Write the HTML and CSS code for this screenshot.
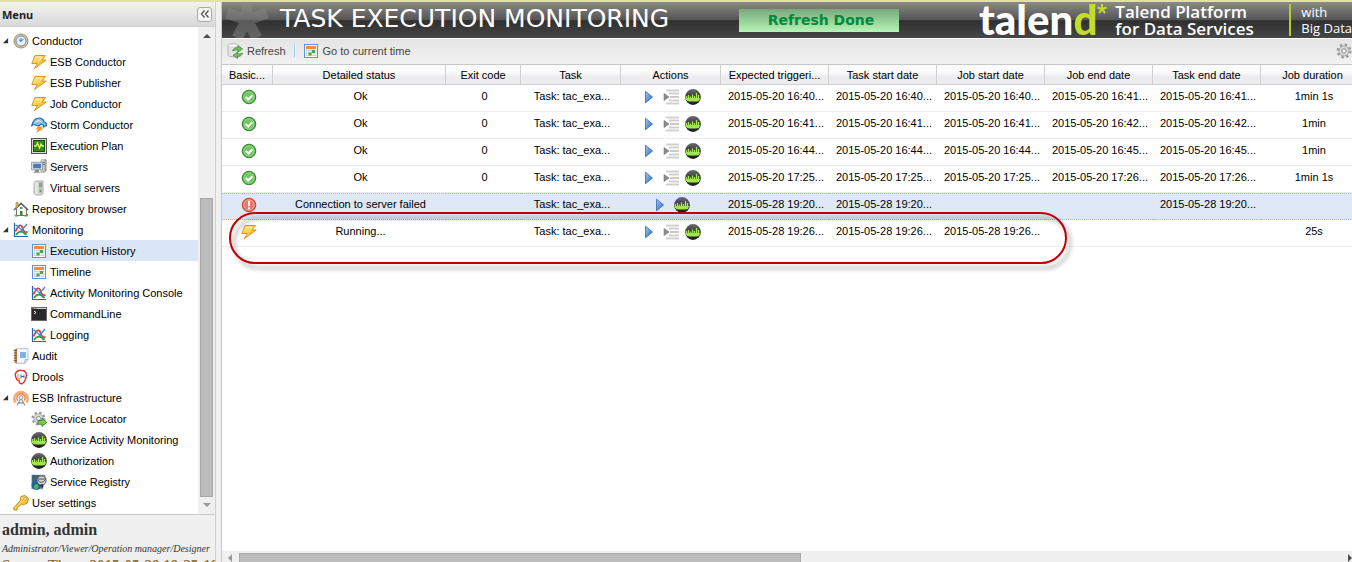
FILE: index.html
```html
<!DOCTYPE html>
<html lang="en">
<head>
<meta charset="utf-8">
<title>Task Execution Monitoring</title>
<link rel="stylesheet" href="styles.css">
</head>
<body>
<svg class="defs" aria-hidden="true">
  <defs>
    <linearGradient id="gold" x1="0" y1="0" x2="1" y2="1"><stop offset="0" stop-color="#ffef8c"/><stop offset="1" stop-color="#f2a813"/></linearGradient>
    <linearGradient id="blue" x1="0" y1="0" x2="1" y2="1"><stop offset="0" stop-color="#a9cdf8"/><stop offset="1" stop-color="#1e62c0"/></linearGradient>
    <linearGradient id="metal" x1="0" y1="0" x2="1" y2="0"><stop offset="0" stop-color="#f4f4f4"/><stop offset="1" stop-color="#9c9c9c"/></linearGradient>
    <linearGradient id="orb" x1="0" y1="0" x2="0" y2="1"><stop offset="0" stop-color="#6a6a6e"/><stop offset=".5" stop-color="#3a3a3e"/><stop offset="1" stop-color="#1c1c20"/></linearGradient>
  </defs>
  <symbol id="i-clock" viewBox="0 0 16 16"><circle cx="8" cy="8" r="7" fill="#d8c3a0" stroke="#a88f68"/><circle cx="8" cy="8" r="5" fill="#e8f1fb" stroke="#6e8fb8"/><path d="M8 8.500V5M8 8.500l2.500-2.500M8 8.500L5.800 6.500" fill="none" stroke="#456a9c"/></symbol>
  <symbol id="i-bolt" viewBox="0 0 16 16"><path d="M4 1.500h10.500L11 6h4.200L3.200 14.800 6.500 9.500H.8z" fill="url(#gold)" stroke="#d8962a"/><path d="M5 3h6L8 7" fill="none" stroke="#fff3b0"/></symbol>
  <symbol id="i-storm" viewBox="0 0 16 16"><path d="M.8 8.500c1-4 3-7.500 7.200-7.500 3 0 5 2 5 4 2 0 2.500 1.500 2.500 3.500l-3 1.500c.5-2-1-3.500-3-2.500-1 1-2 2-4 1C4 7.500 2.500 7.500.8 8.500z" fill="#8cc3ea" stroke="#1c6eaf" stroke-width="1.200"/><path d="M4 5.500c2-2.500 5-2.500 7 .5" fill="none" stroke="#fff"/><path d="M7 9.500h5l-2 2h3L5 16l2-3.500H4.500z" fill="#f39a2b"/></symbol>
  <symbol id="i-plan" viewBox="0 0 16 16"><rect x=".5" y=".5" width="15" height="15" fill="#d8d8d8" stroke="#555"/><rect x="2.500" y="2.500" width="11" height="11" fill="#3a8a18" stroke="#1f4f10"/><path d="M3 8h2l1.500-3 2 5 1.500-4 1 2h2" fill="none" stroke="#d8ff6c" stroke-width="1.300"/></symbol>
  <symbol id="i-servers" viewBox="0 0 16 16"><path d="M10 1.500l1-.8h4.200v11l-1.500 1.500H10z" fill="url(#metal)" stroke="#888" stroke-width=".7"/><path d="M11.500 3.500h2.500M11.500 5.500h2.500" stroke="#777"/><rect x=".7" y="3.200" width="10.800" height="7.600" fill="#dfe3e8" stroke="#888" stroke-width=".8"/><rect x="2.200" y="4.700" width="7.800" height="4.600" fill="#4978bd"/><path d="M4.500 11h3.500v2.500H3z" fill="#888"/><path d="M2.500 13.600h7" stroke="#aaa"/></symbol>
  <symbol id="i-server" viewBox="0 0 16 16"><path d="M3 2.500L5 1h7v12.500L10.500 15H5l-2-1.500z" fill="#e4e4e4" stroke="#999" stroke-width=".8"/><path d="M7.500 2h4v11.500h-4z" fill="#bdbdbd"/><path d="M8 4h3M8 6h3" stroke="#777"/><circle cx="9.500" cy="11" r="1" fill="#4caf35"/></symbol>
  <symbol id="i-house" viewBox="0 0 16 16"><path d="M3.500 7.500L8 3l5.500 4.500v7h-10z" fill="#fffbe4" stroke="#6e7b6b"/><path d="M1 9l7-6.800L15.200 9" fill="none" stroke="#54657a" stroke-width="1.500"/><path d="M3 1.500h2v4l-2 2z" fill="#eebd4c" stroke="#937532" stroke-width=".6"/><path d="M7 6h2.500v2H7z" fill="#4e87bd"/><path d="M7 10h2.500v4.500H7z" fill="#3b7f5b"/><path d="M2 13.500v1.500h3M11.500 15h3v-2" fill="none" stroke="#49a53a"/></symbol>
  <symbol id="i-chart" viewBox="0 0 16 16"><path d="M1.500 1v13.500H15" fill="none" stroke="#2566b7" stroke-width="1.200"/><path d="M2.500 9.500c3-7 5.500-8 7-3.500s3 4.500 5 4" fill="none" stroke="#e23838" stroke-width="1.700"/><path d="M2.500 3c4 1 5 6 11.500 9.500M8 9l6-7" fill="none" stroke="#4986cf" stroke-width="1.300"/><path d="M3 13c3-5 7-4 10 0" fill="none" stroke="#399a37" stroke-width="1.700"/></symbol>
  <symbol id="i-cal" viewBox="0 0 16 16"><rect x="1.500" y="1.500" width="13" height="13" fill="#fff" stroke="#5d94d5"/><path d="M3 3h10v3H3z" fill="#f58a3f"/><path d="M3 7.500h10M3 10h10M3 12.500h10M3.500 6v7M6 6v7M8.500 6v7M11 6v7M13 6v7" stroke="#b6cae1" stroke-width=".7"/><path d="M9 7h3v3H9zM5.500 9.500h3v3h-3z" fill="#4da54a"/></symbol>
  <symbol id="i-cmd" viewBox="0 0 16 16"><rect x=".5" y="1.500" width="15" height="13" fill="#29292b" stroke="#66666c"/><path d="M1 2.500h14" stroke="#d4d4d4"/><path d="M1 2.500h2" stroke="#e23b2e"/><path d="M3.500 2.500h2" stroke="#4fb54a"/><path d="M3 5l2 1.500L3 8" fill="none" stroke="#fff"/></symbol>
  <symbol id="i-audit" viewBox="0 0 16 16"><path d="M3 .7h12v11l-3 3.600H3z" fill="#f5f8fc" stroke="#a6b1c2" stroke-width=".8"/><rect x="1.500" y="1" width="2.500" height="14" fill="#b98553"/><path d="M.8 2.500H4M.8 5H4M.8 7.500H4M.8 10H4M.8 12.500H4" stroke="#6f4930" stroke-width=".8"/><path d="M7 5h6M7 7h6M7 9h6" stroke="#5c9ae5" stroke-width="1.400"/><path d="M15 11.700h-3v3.600" fill="none" stroke="#a6b1c2"/></symbol>
  <symbol id="i-drools" viewBox="0 0 16 16"><path d="M3 8.500C1 4 4 1 8 1.200c4.500 0 6.500 3.300 5 7.300-.5 2-1 4.500-3.500 6-2 .8-3.500-.5-3.500-3C4.500 11.500 3.300 10.500 3 8.500z" fill="#fff" stroke="#dd2d2d" stroke-width="1.400"/><path d="M5 5v5h2" fill="none" stroke="#e5b22d" stroke-width="1.200"/><path d="M8 5.500v4M8 7.500h3M11 6v3" fill="none" stroke="#3b66b6"/></symbol>
  <symbol id="i-antenna" viewBox="0 0 16 16"><path d="M2.500 12.500A6.600 6.600 0 1 1 13.500 12.500" fill="none" stroke="#f4ad78" stroke-width="2.800"/><path d="M4.800 10.500A4 4 0 1 1 11.200 10.500" fill="none" stroke="#ed7b38" stroke-width="1.300"/><circle cx="8" cy="7.500" r="1.900" fill="#eee" stroke="#9a9a9a"/><path d="M7.500 9L4 15.500M8.500 9l3.500 6.500M5.500 13h5" fill="none" stroke="#999" stroke-width="1.300"/></symbol>
  <symbol id="i-gear" viewBox="0 0 16 16"><circle cx="8" cy="8" r="6.200" fill="none" stroke="#9b9b9b" stroke-width="2.600" stroke-dasharray="2.430 2.430"/><circle cx="8" cy="8" r="5" fill="#d9d9d9" stroke="#a5a5a5"/><circle cx="8" cy="8" r="2.200" fill="#f4f4f4" stroke="#888"/></symbol>
  <symbol id="i-locator" viewBox="0 0 16 16"><use href="#i-gear" width="15" height="15"/><path d="M7 9.500h4V7l4.800 4.500-4.800 4v-2.300H7z" fill="#79cb52" stroke="#2c7a22" stroke-width=".8"/></symbol>
  <symbol id="i-sam" viewBox="0 0 16 16"><circle cx="8" cy="8" r="7.900" fill="url(#orb)"/><path d="M1.500 7v4M3.500 6v5M5.500 7.500v4M7.500 5.500v6M9.500 7v4M11.500 4v7M13.500 6v5" stroke="#a6ec4e" stroke-width="1.300"/><path d="M1 9h14l-1 3c-4 .8-8 .8-12 0z" fill="#a0e650"/></symbol>
  <symbol id="i-registry" viewBox="0 0 16 16"><path d="M.5.800h14v7l-3 7.500H.5z" fill="#8f979b"/><circle cx="5.500" cy="11" r="5" fill="#1965ad"/><path d="M3 12c2-3 3-2 4-1s1 2-1 4c-2 1-3-1-3-3z" fill="#5ab444"/><path d="M1 1h8L5 6 1 8z" fill="#416477"/><circle cx="10.500" cy="6.500" r="4.600" fill="#d5d8da" stroke="#4b4f52"/><path d="M7 5h8M7 6c1 3 5 3 7 0" fill="none" stroke="#4b4f52"/><path d="M9 11l3-1v5z" fill="#333"/></symbol>
  <symbol id="i-key" viewBox="0 0 16 16"><path d="M8 1.500l4-1 3.500 3-1 4.500-4 1.700-2-.7L4 13v2H1l-.5-2L7 6z" fill="url(#gold)" stroke="#c48d22"/><circle cx="12" cy="4" r="1.400" fill="#fff" stroke="#b58120" stroke-width=".7"/></symbol>
  <symbol id="i-refresh" viewBox="0 0 16 16"><path d="M1 2.500C1 .2 11 .2 11 2.500V12c0 2.500-10 2.500-10 0z" fill="#e4e4e4" stroke="#aaa" stroke-width=".8"/><ellipse cx="6" cy="2.600" rx="4.500" ry="1.500" fill="#fff" stroke="#bbb" stroke-width=".5"/><path d="M5.500 8c1-3 3-3.500 5.500-3.500V2.500L15.500 6 11 9V7c-2 0-3.500 0-5.500 1z" fill="#72c05b" stroke="#328335" stroke-width=".7"/><path d="M15.500 10c-1 3-3 3.500-5 3.500v2L6 12.300 10.500 9v2c2 0 3 0 5-1z" fill="#72c05b" stroke="#328335" stroke-width=".7"/></symbol>
  <symbol id="i-ok" viewBox="0 0 16 16"><circle cx="8" cy="8" r="6.800" fill="#4cad45" stroke="#38842f"/><circle cx="8" cy="8" r="5.200" fill="#70c663" stroke="#b4e3a8" stroke-width=".7"/><path d="M4.800 8l2.400 2.500 4.200-4.300" fill="none" stroke="#fff" stroke-width="2"/></symbol>
  <symbol id="i-error" viewBox="0 0 16 16"><circle cx="8" cy="8" r="6.800" fill="#e35246" stroke="#c94438"/><circle cx="8" cy="8" r="5.300" fill="#ec7668" stroke="#ffbcb2" stroke-width=".8"/><path d="M8 3.700v5.500M8 10.300v2" stroke="#fff" stroke-width="2"/></symbol>
  <symbol id="i-play" viewBox="0 0 16 16"><path d="M4.500 2.200L11.500 8l-7 5.800z" fill="url(#blue)" stroke="#2b68bd" stroke-width=".8"/></symbol>
  <symbol id="i-log" viewBox="0 0 16 16"><path d="M3 1.500h13M6 4.500h10M7 8h9M6 11.500h10M3 14.500h13" stroke="#aaa" stroke-width="1.700"/><path d="M3 1.500h13M6 4.500h10M7 8h9M6 11.500h10M3 14.500h13" stroke="#e6e6e6" stroke-width=".6"/><path d="M1 4.500L6 8l-5 3.500z" fill="#8b8b8b" stroke="#777" stroke-width=".6"/></symbol>
  <symbol id="i-open" viewBox="0 0 8 8"><path d="M1 7h6V1z" fill="#333"/></symbol>
  <symbol id="i-star" viewBox="0 0 50 36"><path d="M25 18V-4M25 18L5 11M25 18l20-7M25 18L15 36M25 18l10 18" fill="none" stroke="#8c8c8c" stroke-width="11"/></symbol>
</svg>

<div class="page">
  <aside class="sidebar">
    <header class="menu-head">
      <h2 class="menu-title">Menu</h2>
      <button class="collapse" aria-label="Collapse menu"><svg viewBox="0 0 10 8"><path d="M4.500.5L1.500 4l3 3.500M8.500.5l-3 3.500 3 3.500" fill="none" stroke="#555" stroke-width="1.300"/></svg></button>
    </header>
    <div class="menu-body">
      <nav class="tree">
        <a class="node" href="#"><svg class="arrow"><use href="#i-open"/></svg><svg class="icon"><use href="#i-clock"/></svg>Conductor</a>
        <a class="node sub" href="#"><svg class="icon"><use href="#i-bolt"/></svg>ESB Conductor</a>
        <a class="node sub" href="#"><svg class="icon"><use href="#i-bolt"/></svg>ESB Publisher</a>
        <a class="node sub" href="#"><svg class="icon"><use href="#i-bolt"/></svg>Job Conductor</a>
        <a class="node sub" href="#"><svg class="icon"><use href="#i-storm"/></svg>Storm Conductor</a>
        <a class="node sub" href="#"><svg class="icon"><use href="#i-plan"/></svg>Execution Plan</a>
        <a class="node sub" href="#"><svg class="icon"><use href="#i-servers"/></svg>Servers</a>
        <a class="node sub" href="#"><svg class="icon"><use href="#i-server"/></svg>Virtual servers</a>
        <a class="node leaf" href="#"><svg class="icon"><use href="#i-house"/></svg>Repository browser</a>
        <a class="node" href="#"><svg class="arrow"><use href="#i-open"/></svg><svg class="icon"><use href="#i-chart"/></svg>Monitoring</a>
        <a class="node sub current" href="#" aria-current="page"><svg class="icon"><use href="#i-cal"/></svg>Execution History</a>
        <a class="node sub" href="#"><svg class="icon"><use href="#i-cal"/></svg>Timeline</a>
        <a class="node sub" href="#"><svg class="icon"><use href="#i-chart"/></svg>Activity Monitoring Console</a>
        <a class="node sub" href="#"><svg class="icon"><use href="#i-cmd"/></svg>CommandLine</a>
        <a class="node sub" href="#"><svg class="icon"><use href="#i-chart"/></svg>Logging</a>
        <a class="node leaf" href="#"><svg class="icon"><use href="#i-audit"/></svg>Audit</a>
        <a class="node leaf" href="#"><svg class="icon"><use href="#i-drools"/></svg>Drools</a>
        <a class="node" href="#"><svg class="arrow"><use href="#i-open"/></svg><svg class="icon"><use href="#i-antenna"/></svg>ESB Infrastructure</a>
        <a class="node sub" href="#"><svg class="icon"><use href="#i-locator"/></svg>Service Locator</a>
        <a class="node sub" href="#"><svg class="icon"><use href="#i-sam"/></svg>Service Activity Monitoring</a>
        <a class="node sub" href="#"><svg class="icon"><use href="#i-sam"/></svg>Authorization</a>
        <a class="node sub" href="#"><svg class="icon"><use href="#i-registry"/></svg>Service Registry</a>
        <a class="node leaf" href="#"><svg class="icon"><use href="#i-key"/></svg>User settings</a>
      </nav>
      <div class="vscroll" aria-hidden="true">
        <svg class="scroll-arrow" viewBox="0 0 8 4"><path d="M0 4h8L4 0z" fill="#505050"/></svg>
        <div class="vtrack"><div class="vthumb"></div></div>
        <svg class="scroll-arrow" viewBox="0 0 8 4"><path d="M0 0h8L4 4z" fill="#999"/></svg>
      </div>
    </div>
    <footer class="user">
      <p class="user-name">admin, admin</p>
      <p class="user-roles">Administrator/Viewer/Operation manager/Designer</p>
      <p class="server-time">Server Time: 2015-05-28 19:25:19</p>
    </footer>
  </aside>

  <main class="main">
    <header class="banner">
      <svg class="banner-star"><use href="#i-star"/></svg>
      <h1 class="title">TASK EXECUTION MONITORING</h1>
      <div class="notice" role="status">Refresh Done</div>
      <div class="brand">
        <span class="logo">talen<span class="lime">d</span></span>
        <svg class="logo-star" viewBox="0 0 10 10"><path d="M5 0v5M5 5l4.500-1.500M5 5l3 4.200M5 5L2 9.200M5 5L.5 3.500" stroke="#c4dc2b" stroke-width="2" fill="none"/></svg>
        <span class="product">Talend Platform<br>for Data Services</span>
        <span class="edition">with<br>Big Data</span>
      </div>
    </header>
    <div class="toolbar">
      <button class="tool"><svg class="icon"><use href="#i-refresh"/></svg>Refresh</button>
      <span class="divider"></span>
      <button class="tool"><svg class="icon"><use href="#i-cal"/></svg>Go to current time</button>
      <button class="tool settings" aria-label="Settings"><svg class="icon"><use href="#i-gear"/></svg></button>
    </div>
    <div class="grid">
      <table class="runs">
        <colgroup><col class="c-basic"><col class="c-detail"><col class="c-exit"><col class="c-task"><col class="c-task"><col class="c-date"><col class="c-date"><col class="c-date"><col class="c-date"><col class="c-date"><col></colgroup>
        <thead>
          <tr><th>Basic...</th><th>Detailed status</th><th>Exit code</th><th>Task</th><th>Actions</th><th>Expected triggeri...</th><th>Task start date</th><th>Job start date</th><th>Job end date</th><th>Task end date</th><th>Job duration</th></tr>
        </thead>
        <tbody>
          <tr><td class="icon-cell"><svg class="icon state"><use href="#i-ok"/></svg></td><td>Ok</td><td>0</td><td>Task: tac_exa...</td><td class="icon-cell action-cell"><div class="actions"><button aria-label="Run"><svg class="icon"><use href="#i-play"/></svg></button><button aria-label="Log"><svg class="icon"><use href="#i-log"/></svg></button><button aria-label="Activity"><svg class="icon"><use href="#i-sam"/></svg></button></div></td><td>2015-05-20 16:40...</td><td>2015-05-20 16:40...</td><td>2015-05-20 16:40...</td><td>2015-05-20 16:41...</td><td>2015-05-20 16:41...</td><td>1min 1s</td></tr>
          <tr><td class="icon-cell"><svg class="icon state"><use href="#i-ok"/></svg></td><td>Ok</td><td>0</td><td>Task: tac_exa...</td><td class="icon-cell action-cell"><div class="actions"><button aria-label="Run"><svg class="icon"><use href="#i-play"/></svg></button><button aria-label="Log"><svg class="icon"><use href="#i-log"/></svg></button><button aria-label="Activity"><svg class="icon"><use href="#i-sam"/></svg></button></div></td><td>2015-05-20 16:41...</td><td>2015-05-20 16:41...</td><td>2015-05-20 16:41...</td><td>2015-05-20 16:42...</td><td>2015-05-20 16:42...</td><td>1min</td></tr>
          <tr><td class="icon-cell"><svg class="icon state"><use href="#i-ok"/></svg></td><td>Ok</td><td>0</td><td>Task: tac_exa...</td><td class="icon-cell action-cell"><div class="actions"><button aria-label="Run"><svg class="icon"><use href="#i-play"/></svg></button><button aria-label="Log"><svg class="icon"><use href="#i-log"/></svg></button><button aria-label="Activity"><svg class="icon"><use href="#i-sam"/></svg></button></div></td><td>2015-05-20 16:44...</td><td>2015-05-20 16:44...</td><td>2015-05-20 16:44...</td><td>2015-05-20 16:45...</td><td>2015-05-20 16:45...</td><td>1min</td></tr>
          <tr><td class="icon-cell"><svg class="icon state"><use href="#i-ok"/></svg></td><td>Ok</td><td>0</td><td>Task: tac_exa...</td><td class="icon-cell action-cell"><div class="actions"><button aria-label="Run"><svg class="icon"><use href="#i-play"/></svg></button><button aria-label="Log"><svg class="icon"><use href="#i-log"/></svg></button><button aria-label="Activity"><svg class="icon"><use href="#i-sam"/></svg></button></div></td><td>2015-05-20 17:25...</td><td>2015-05-20 17:25...</td><td>2015-05-20 17:25...</td><td>2015-05-20 17:26...</td><td>2015-05-20 17:26...</td><td>1min 1s</td></tr>
          <tr class="selected"><td class="icon-cell"><svg class="icon state"><use href="#i-error"/></svg></td><td>Connection to server failed</td><td></td><td>Task: tac_exa...</td><td class="icon-cell action-cell"><div class="actions"><button aria-label="Run"><svg class="icon"><use href="#i-play"/></svg></button><button aria-label="Activity"><svg class="icon"><use href="#i-sam"/></svg></button></div></td><td>2015-05-28 19:20...</td><td>2015-05-28 19:20...</td><td></td><td></td><td>2015-05-28 19:20...</td><td></td></tr>
          <tr><td class="icon-cell"><svg class="icon state"><use href="#i-bolt"/></svg></td><td>Running...</td><td></td><td>Task: tac_exa...</td><td class="icon-cell action-cell"><div class="actions"><button aria-label="Run"><svg class="icon"><use href="#i-play"/></svg></button><button aria-label="Log"><svg class="icon"><use href="#i-log"/></svg></button><button aria-label="Activity"><svg class="icon"><use href="#i-sam"/></svg></button></div></td><td>2015-05-28 19:26...</td><td>2015-05-28 19:26...</td><td>2015-05-28 19:26...</td><td></td><td></td><td>25s</td></tr>
        </tbody>
      </table>
      <div class="callout"></div>
    </div>
    <div class="hscroll" aria-hidden="true">
      <svg class="side-arrow" viewBox="0 0 4 8"><path d="M4 0v8L0 4z" fill="#999"/></svg>
      <div class="htrack"><div class="hthumb"></div></div>
      <svg class="side-arrow" viewBox="0 0 4 8"><path d="M0 0v8l4-4z" fill="#505050"/></svg>
    </div>
  </main>
</div>
</body>
</html>
```
FILE: styles.css
```css
* { box-sizing: border-box; }

body {
  margin: 0;
  font-family: "Liberation Sans", Arial, sans-serif;
  font-size: 11px;
  color: #000;
  background: #f0f0f0;
}

h1, h2, p { margin: 0; }

button {
  padding: 0;
  border: 0;
  background: none;
  font: inherit;
  color: inherit;
}

.defs { position: absolute; width: 0; height: 0; }
.icon { display: block; width: 16px; height: 16px; flex: none; }

.page {
  display: grid;
  grid-template-columns: 216px minmax(0, 1fr);
  column-gap: 5px;
  height: 100vh;
  overflow: hidden;
  border-top: 2px solid #e3e394;
}

/* Sidebar */
.sidebar {
  display: flex;
  flex-direction: column;
  min-height: 0;
  border-right: 1px solid #d0d0d0;
}

.menu-head {
  display: flex;
  align-items: center;
  justify-content: space-between;
  height: 25px;
  flex: none;
  padding: 0 3px 0 2px;
  background: linear-gradient(#f3f3f3, #d8d8d8);
  border-bottom: 1px solid #d0d0d0;
}

.menu-title {
  font: bold 11px "Noto Sans", Tahoma, sans-serif;
  color: #222;
}

.collapse {
  display: grid;
  place-items: center;
  width: 15px;
  height: 15px;
  border: 1px solid #aaa;
  border-radius: 3px;
  background: #f4f4f4;
}

.collapse svg { width: 10px; height: 8px; }

.menu-body {
  display: flex;
  flex: none;
  background: #fff;
}

.tree {
  flex: 1;
  min-width: 0;
  padding: 3px 0 1px;
  overflow: hidden;
}

.node {
  display: flex;
  align-items: center;
  height: 21px;
  gap: 3px;
  padding-left: 2px;
  color: #000;
  text-decoration: none;
  white-space: nowrap;
}

.node.leaf { padding-left: 13px; }
.node.sub { padding-left: 31px; }
.node.current { background: #d9e7f8; }
.arrow { width: 7px; height: 7px; margin-right: 1px; flex: none; }

.vscroll {
  display: flex;
  flex-direction: column;
  align-items: center;
  width: 17px;
  padding: 7px 2px;
  background: #f0f0f0;
}

.scroll-arrow { width: 8px; height: 4px; flex: none; }

.vtrack {
  display: flex;
  align-items: flex-end;
  flex: 1;
  width: 100%;
  padding: 6px 0;
}

.vthumb {
  width: 100%;
  height: 66%;
  background: #bcbcbc;
  border: 1px solid #a8a8a8;
}

.user {
  flex: 1;
  min-height: 0;
  padding: 6px 2px 0;
  overflow: hidden;
  border-top: 1px solid #c8c8c8;
  font-family: "Liberation Serif", "Times New Roman", serif;
  color: #333;
  white-space: nowrap;
}

.user-name { font-size: 16px; font-weight: bold; line-height: 18px; }
.user-roles { font-size: 10px; font-style: italic; line-height: 20px; }
.server-time { font-size: 15px; font-weight: bold; line-height: 12px; color: #8f7038; }

/* Main area */
.main {
  display: flex;
  flex-direction: column;
  min-width: 0;
  min-height: 0;
  border-left: 1px solid #c8c8c8;
  background: #fff;
}

.banner {
  display: flex;
  align-items: center;
  height: 36px;
  flex: none;
  overflow: hidden;
  background: linear-gradient(#8a8a8a 0%, #555 49%, #303030 52%, #464646 100%);
  color: #fff;
}

.banner-star { width: 50px; height: 36px; flex: none; margin-right: 8px; opacity: 0.45; }

.title {
  width: 459px;
  flex: none;
  padding-bottom: 2px;
  font: 25px "DejaVu Sans", Verdana, sans-serif;
  line-height: 32px;
  white-space: nowrap;
}

.notice {
  width: 160px;
  flex: none;
  padding-left: 4px;
  background: linear-gradient(#78a97a, #b6f5b5);
  font: bold 14px "DejaVu Sans", Verdana, sans-serif;
  line-height: 23px;
  color: #008a3c;
  text-align: center;
  white-space: nowrap;
}

.brand {
  display: flex;
  align-items: center;
  flex: none;
  margin-left: auto;
  white-space: nowrap;
}

.logo { padding-bottom: 2px; font: 900 42px "Lato", sans-serif; line-height: 34px; }
.lime { color: #c4dc2b; }
.logo-star { width: 10px; height: 10px; align-self: flex-start; margin: 2px 8px 0 0; }

.product {
  width: 174px;
  font: 600 17px "Open Sans", "Trebuchet MS", sans-serif;
  line-height: 17px;
}

.edition {
  padding-left: 10px;
  border-left: 2px solid #b4cc2e;
  font: 13px "Open Sans", "Trebuchet MS", sans-serif;
  line-height: 16px;
}

.toolbar {
  display: flex;
  align-items: center;
  gap: 7px;
  height: 27px;
  flex: none;
  padding: 0 0 2px 5px;
  border-top: 1px solid #fff;
  border-bottom: 1px solid #c8c8c8;
  background: linear-gradient(#e4e4e4, #f2f2f2);
  color: #444;
}

.tool { display: flex; align-items: center; gap: 4px; }
.divider { width: 2px; height: 13px; margin-left: 1px; border-left: 1px solid #98c8ff; border-right: 1px solid #fff; }
.settings { margin-left: auto; }

.grid {
  position: relative;
  flex: 1;
  min-height: 0;
  overflow: hidden;
}

.runs {
  width: 100%;
  min-width: 1143px;
  table-layout: fixed;
  border-collapse: separate;
  border-spacing: 0;
  text-align: center;
  white-space: nowrap;
}

.c-basic { width: 51px; }
.c-detail { width: 173px; }
.c-exit { width: 75px; }
.c-task { width: 100px; }
.c-date { width: 108px; }

.runs th {
  height: 20px;
  padding: 0;
  font-weight: normal;
  background: linear-gradient(#fbfbfb 40%, #ededf0 60%);
  border-right: 1px solid #d0d0d0;
  border-bottom: 1px solid #d0d0d0;
}

.runs td {
  height: 27px;
  padding: 0 0 4px 2px;
  border-bottom: 1px solid #ededed;
}

.runs .icon-cell { padding-bottom: 2px; }
.runs .action-cell { padding-left: 0; }

.runs .selected td {
  padding-bottom: 5px;
  background: #dfe8f6;
  border-top: 1px dotted #a3bae9;
  border-bottom: 1px dotted #a3bae9;
}

.runs .selected .icon-cell { padding-bottom: 3px; }

.state { margin: 0 auto; }
.actions { display: flex; justify-content: center; gap: 6px; }

.callout {
  position: absolute;
  top: 147px;
  left: 7px;
  width: 838px;
  height: 52px;
  border: 2px solid #c00000;
  border-radius: 26px;
  filter: drop-shadow(4px 5px 2px rgba(0, 0, 0, 0.35));
  pointer-events: none;
}

.hscroll {
  display: flex;
  align-items: center;
  height: 11px;
  flex: none;
  padding: 2px 0 0 6px;
  background: #f0f0f0;
}

.side-arrow { width: 4px; height: 8px; flex: none; }
.htrack { flex: 1; align-self: stretch; padding: 0 7px; }
.hthumb { width: 51%; height: 100%; background: #bcbcbc; border: 1px solid #a8a8a8; border-bottom: 0; }
```
